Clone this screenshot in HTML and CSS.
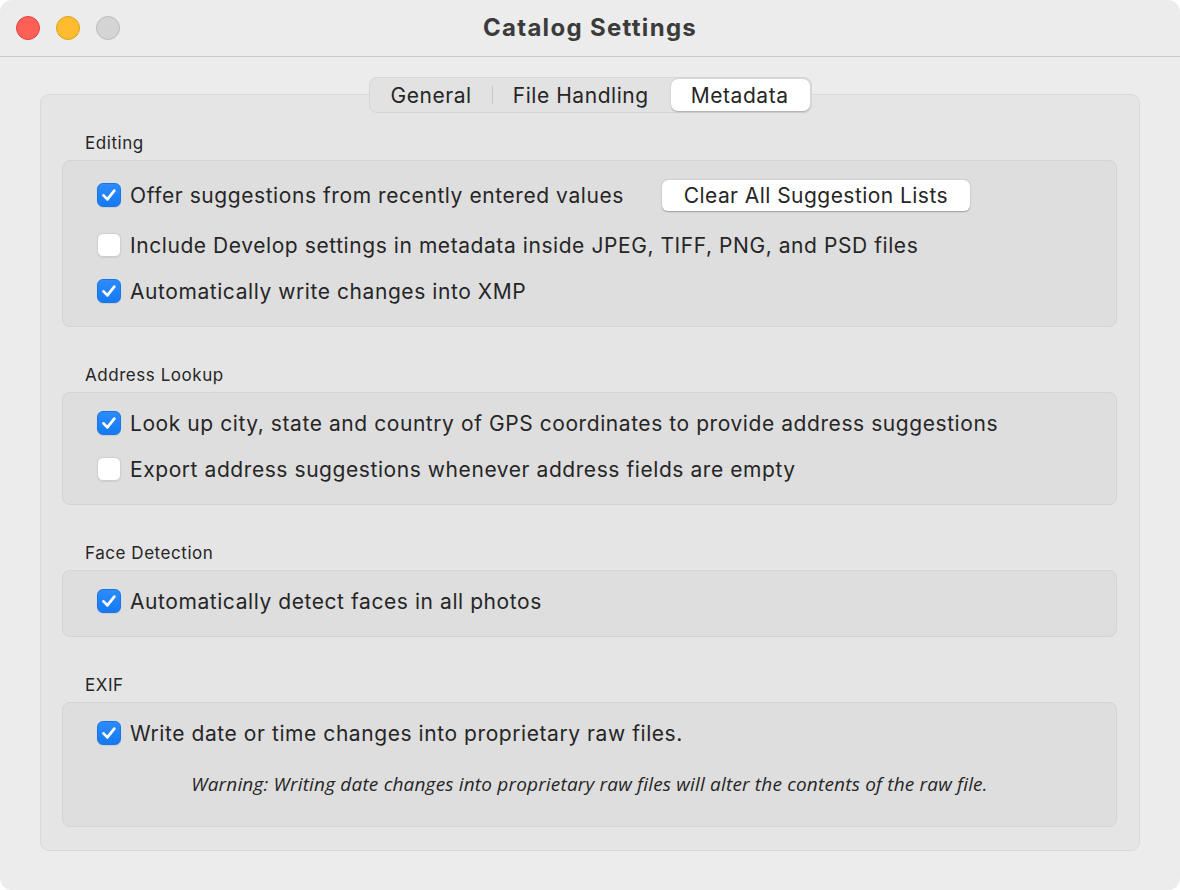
FILE: index.html
```html
<!DOCTYPE html>
<html>
<head>
<meta charset="utf-8">
<link rel="stylesheet" href="styles.css">
</head>
<body>
<div class="window">
  <div class="titlebar">
    <div class="lights">
      <span class="light red"></span>
      <span class="light yellow"></span>
      <span class="light gray"></span>
    </div>
    <div class="title">Catalog Settings</div>
  </div>
  <div class="content">
    <div class="tabs">
      <div class="tab">General</div>
      <div class="tab-sep"></div>
      <div class="tab">File Handling</div>
      <div class="tab active">Metadata</div>
    </div>
    <div class="group">
      <div class="section">
        <div class="label">Editing</div>
        <div class="box">
          <div class="row row-btn">
            <span class="cb on"><svg viewBox="0 0 24 24"><path d="M6 12.4 L10.2 16.8 L17.8 7.2"/></svg></span>
            <span class="text">Offer suggestions from recently entered values</span>
            <button class="btn">Clear All Suggestion Lists</button>
          </div>
          <div class="row">
            <span class="cb"></span>
            <span class="text">Include Develop settings in metadata inside JPEG, TIFF, PNG, and PSD files</span>
          </div>
          <div class="row">
            <span class="cb on"><svg viewBox="0 0 24 24"><path d="M6 12.4 L10.2 16.8 L17.8 7.2"/></svg></span>
            <span class="text">Automatically write changes into XMP</span>
          </div>
        </div>
      </div>
      <div class="section">
        <div class="label">Address Lookup</div>
        <div class="box">
          <div class="row">
            <span class="cb on"><svg viewBox="0 0 24 24"><path d="M6 12.4 L10.2 16.8 L17.8 7.2"/></svg></span>
            <span class="text">Look up city, state and country of GPS coordinates to provide address suggestions</span>
          </div>
          <div class="row">
            <span class="cb"></span>
            <span class="text">Export address suggestions whenever address fields are empty</span>
          </div>
        </div>
      </div>
      <div class="section">
        <div class="label">Face Detection</div>
        <div class="box">
          <div class="row">
            <span class="cb on"><svg viewBox="0 0 24 24"><path d="M6 12.4 L10.2 16.8 L17.8 7.2"/></svg></span>
            <span class="text">Automatically detect faces in all photos</span>
          </div>
        </div>
      </div>
      <div class="section">
        <div class="label">EXIF</div>
        <div class="box box-exif">
          <div class="row">
            <span class="cb on"><svg viewBox="0 0 24 24"><path d="M6 12.4 L10.2 16.8 L17.8 7.2"/></svg></span>
            <span class="text">Write date or time changes into proprietary raw files.</span>
          </div>
          <div class="warning">Warning: Writing date changes into proprietary raw files will alter the contents of the raw file.</div>
        </div>
      </div>
    </div>
  </div>
</div>
</body>
</html>
```
FILE: styles.css
```css
* { box-sizing: border-box; }
html, body {
  margin: 0;
  padding: 0;
  background: #ffffff;
}
body {
  width: 1180px;
  height: 890px;
  overflow: hidden;
  font-family: "Inter", "Noto Sans", sans-serif;
  color: #262626;
}
.window {
  width: 1180px;
  height: 890px;
  background: #ececec;
  border-radius: 12px;
  overflow: hidden;
  display: flex;
  flex-direction: column;
}
.titlebar {
  height: 57px;
  border-bottom: 1px solid #cbcbcb;
  display: flex;
  align-items: center;
  justify-content: center;
  position: relative;
  flex-shrink: 0;
}
.lights {
  position: absolute;
  left: 16px;
  top: 16px;
  display: flex;
  gap: 16px;
}
.light {
  width: 24px;
  height: 24px;
  border-radius: 50%;
  display: block;
}
.red { background: #fe5f57; border: 1px solid #e0443e; }
.yellow { background: #febc2e; border: 1px solid #dea123; }
.gray { background: #d4d4d4; border: 1px solid #bcbcbc; }
.title {
  font-family: "Inter", "Liberation Sans", sans-serif;
  font-weight: 700;
  font-size: 24px;
  letter-spacing: 1.3px;
  color: #3b3b3b;
  margin-top: -2px;
}
.content {
  padding: 20px 40px 0 40px;
  display: flex;
  flex-direction: column;
}
.tabs {
  align-self: center;
  position: relative;
  z-index: 2;
  height: 36px;
  margin-bottom: -19px;
  display: flex;
  align-items: center;
  background: #e2e2e2;
  border: 1px solid #d6d6d6;
  border-radius: 8px;
  padding: 1px;
}
.tab {
  height: 32px;
  display: flex;
  align-items: center;
  padding: 0 20px;
  font-size: 21px;
  letter-spacing: 0.55px;
  color: #262626;
  border-radius: 7px;
}
.tab-sep {
  width: 1px;
  height: 18px;
  background: #c8c8c8;
}
.tab.active {
  background: #ffffff;
  box-shadow: 0 0.5px 1.5px rgba(0,0,0,0.25);
  margin-left: 2px;
  padding: 0 21px 0 20px;
}
.group {
  height: 757px;
  background: #e5e5e5;
  border: 1px solid #d9d9d9;
  border-radius: 9px;
  padding: 38px 22px 0 21px;
  display: flex;
  flex-direction: column;
  gap: 38px;
}
.label {
  height: 20px;
  line-height: 20px;
  font-size: 17px;
  letter-spacing: 0.55px;
  padding-left: 23px;
  margin-bottom: 7px;
  color: #262626;
}
.box {
  background: #dedede;
  border: 1px solid #d4d4d4;
  border-radius: 8px;
  padding: 15px 34px 20px 34px;
  display: flex;
  flex-direction: column;
  gap: 16px;
}
.row {
  height: 30px;
  display: flex;
  align-items: center;
}
.row-btn { height: 38px; }
.cb {
  width: 24px;
  height: 24px;
  border-radius: 6px;
  background: #ffffff;
  border: 1px solid #cfcfcf;
  box-shadow: 0 0.5px 1px rgba(0,0,0,0.08);
  flex-shrink: 0;
  display: flex;
  align-items: center;
  justify-content: center;
  margin-right: 9px;
}
.cb.on {
  background: linear-gradient(#2c8cfc, #1479f3);
  border: 1px solid #1a76e8;
}
.cb svg {
  width: 24px;
  height: 24px;
}
.cb path {
  fill: none;
  stroke: #ffffff;
  stroke-width: 3;
  stroke-linecap: round;
  stroke-linejoin: round;
}
.text {
  font-size: 21px;
  letter-spacing: 0.57px;
  white-space: nowrap;
}
.btn {
  margin-left: 38px;
  height: 31px;
  width: 308px;
  background: #ffffff;
  border: none;
  border-radius: 6px;
  box-shadow: 0 0.5px 1.5px rgba(0,0,0,0.3);
  font-family: "Inter", "Noto Sans", sans-serif;
  font-size: 21px;
  letter-spacing: 0.45px;
  color: #262626;
  padding: 0;
}
.box-exif { padding-bottom: 27px; gap: 21px; }
.warning {
  height: 30px;
  line-height: 30px;
  text-align: center;
  font-family: "Open Sans", sans-serif;
  font-style: italic;
  font-size: 19px;
  letter-spacing: 0.18px;
  color: #262626;
  margin-left: -34px;
  margin-right: -34px;
}
```
